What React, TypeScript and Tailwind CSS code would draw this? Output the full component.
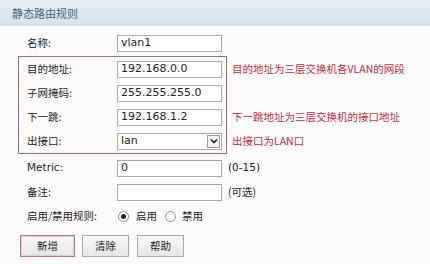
import React from "react"

const cjk = "font-['Noto_Sans_CJK_SC',sans-serif]"
const latin = "font-['DejaVu_Sans','Noto_Sans_CJK_SC',sans-serif]"

function TextBox({ value = "" }: { value?: string }) {
  return (
    <div
      className={`flex h-[17px] w-[105px] items-center border border-[#a7a7a7] bg-white pl-[3px] text-[11px] text-[#222] ${latin}`}
    >
      {value}
    </div>
  )
}

function SelectBox({ value }: { value: string }) {
  return (
    <div className={`flex h-[17px] w-[105px] items-center border border-[#a7a7a7] bg-white text-[11px] text-[#222] ${latin}`}>
      <span className="flex-1 pl-[3px]">{value}</span>
      <span className="mr-[1px] flex h-[13px] w-[13px] items-center justify-center border border-[#9a9a9a] bg-[#f1f1f1]">
        <svg width="8" height="6" viewBox="0 0 8 6">
          <path d="M1 1.5 L4 4.5 L7 1.5" fill="none" stroke="#222" strokeWidth="1.6" />
        </svg>
      </span>
    </div>
  )
}

function Row({ label, children, latinLabel = false }: { label: string; children: React.ReactNode; latinLabel?: boolean }) {
  return (
    <div className="flex h-[24px] items-center">
      <div className={`w-[90px] text-[10.5px] text-[#222] ${latinLabel ? latin : cjk}`}>{label}</div>
      {children}
    </div>
  )
}

function Note({ text }: { text: string }) {
  return (
    <div className={`flex h-[24px] items-center text-[10.5px] text-[#b8303f] ${cjk}`}>{text}</div>
  )
}

function Radio({ checked }: { checked?: boolean }) {
  return (
    <span className="flex h-[11px] w-[11px] items-center justify-center rounded-full border border-[#8a8a8a] bg-white">
      {checked && <span className="h-[5px] w-[5px] rounded-full bg-[#222]" />}
    </span>
  )
}

export default function App() {
  return (
    <div className="h-[264px] w-[430px] overflow-hidden bg-[#fbfbfb]">
      <div className="flex h-[26px] items-center bg-gradient-to-b from-[#e6edf2] to-[#d7e1ea] pl-[12px]">
        <span className={`text-[11px] text-[#3f6184] ${cjk}`}>静态路由规则</span>
      </div>

      <div className="pt-[5px]">
        <div className="pl-[27px]">
          <Row label="名称:">
            <TextBox value="vlan1" />
          </Row>
        </div>

        <div className="mt-[1px] flex">
          <div className="ml-[18px] w-[209px] border border-[#a46b7a] pl-[8px]">
            <Row label="目的地址:">
              <TextBox value="192.168.0.0" />
            </Row>
            <Row label="子网掩码:">
              <TextBox value="255.255.255.0" />
            </Row>
            <Row label="下一跳:">
              <TextBox value="192.168.1.2" />
            </Row>
            <Row label="出接口:">
              <SelectBox value="lan" />
            </Row>
          </div>
          <div className="ml-[5px] pt-[1px]">
            <Note text="目的地址为三层交换机各VLAN的网段" />
            <div className="h-[24px]" />
            <Note text="下一跳地址为三层交换机的接口地址" />
            <Note text="出接口为LAN口" />
          </div>
        </div>

        <div className="mt-[2px] pl-[27px]">
          <Row label="Metric:" latinLabel>
            <TextBox value="0" />
            <span className={`ml-[6px] text-[10.5px] text-[#222] ${latin}`}>(0-15)</span>
          </Row>
          <Row label="备注:">
            <TextBox />
            <span className={`ml-[6px] text-[10.5px] text-[#222] ${cjk}`}>(可选)</span>
          </Row>
          <Row label="启用/禁用规则:">
            <div className={`flex items-center text-[10.5px] text-[#222] ${cjk}`}>
              <span className="ml-[1px]">
                <Radio checked />
              </span>
              <span className="ml-[7px]">启用</span>
              <span className="ml-[8px]">
                <Radio />
              </span>
              <span className="ml-[6px]">禁用</span>
            </div>
          </Row>
        </div>

        <div className={`ml-[20px] mt-[7px] flex gap-[7px] text-[10.5px] text-[#222] ${cjk}`}>
          <button className="flex h-[22px] w-[55px] items-center justify-center border border-[#b07a86] bg-gradient-to-b from-[#f7f7f7] to-[#e6e6e6] shadow-[inset_0_0_0_1px_#d9d0d2]">
            新增
          </button>
          <button className="flex h-[22px] w-[47px] items-center justify-center border border-[#a9a9a9] bg-gradient-to-b from-[#f7f7f7] to-[#e6e6e6]">
            清除
          </button>
          <button className="ml-[1px] flex h-[22px] w-[47px] items-center justify-center border border-[#a9a9a9] bg-gradient-to-b from-[#f7f7f7] to-[#e6e6e6]">
            帮助
          </button>
        </div>
      </div>
    </div>
  )
}
